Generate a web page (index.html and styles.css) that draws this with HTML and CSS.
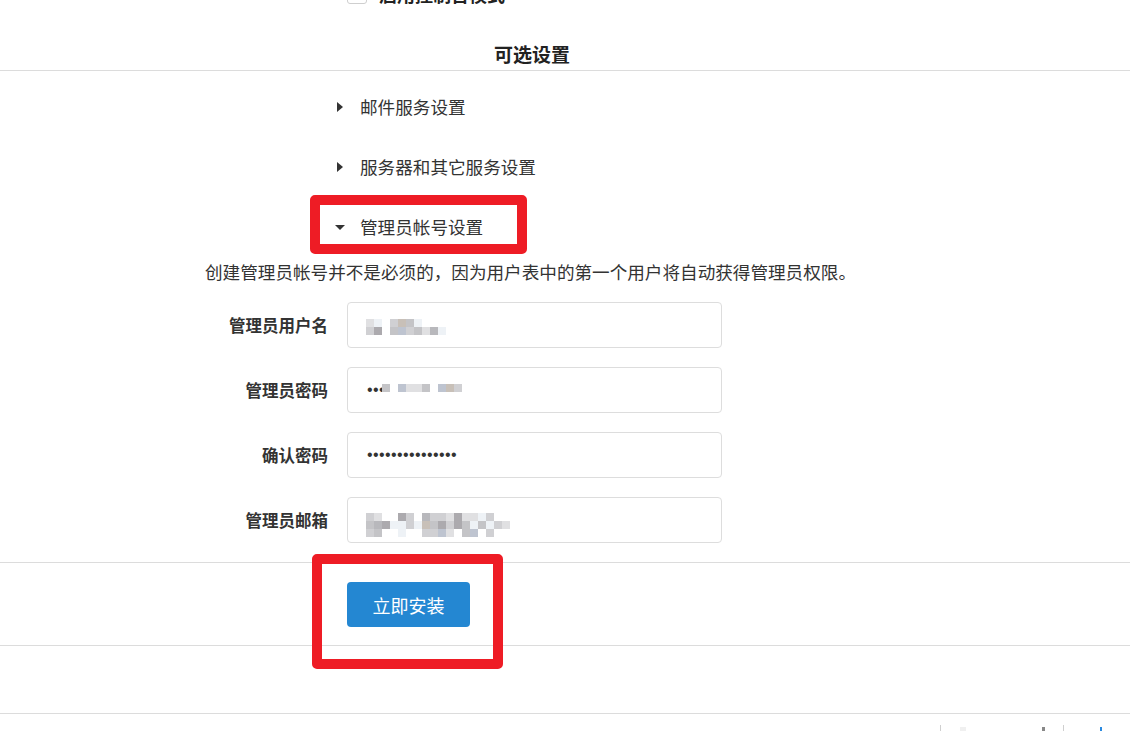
FILE: index.html
```html
<!DOCTYPE html>
<html lang="zh-CN">
<head>
<meta charset="utf-8">
<title>安装</title>
<link rel="stylesheet" href="styles.css">
</head>
<body>
<div class="page">
  <div class="console-row">
    <span class="checkbox"></span>
    <span class="console-label">启用控制台模式</span>
  </div>

  <h2 class="section-title">可选设置</h2>
  <div class="rule"></div>

  <ul class="collapsibles">
    <li class="collapsible"><span class="tri tri-right"></span><span>邮件服务设置</span></li>
    <li class="collapsible"><span class="tri tri-right"></span><span>服务器和其它服务设置</span></li>
    <li class="collapsible"><span class="tri tri-down"></span><span>管理员帐号设置</span></li>
  </ul>

  <p class="desc">创建管理员帐号并不是必须的，因为用户表中的第一个用户将自动获得管理员权限。</p>

  <div class="form">
    <label class="label">管理员用户名</label>
    <div class="field">
      <input class="input" type="text" value="">
      <div class="mosaic mosaic-user">
        <i class="g2"></i><i class="g1"></i><i></i><i class="g3"></i><i class="g7"></i><i class="g4"></i><i class="g1"></i><i></i><i></i><i></i>
        <i class="g3"></i><i class="g6"></i><i></i><i class="g4"></i><i class="g8"></i><i class="g3"></i><i class="g4"></i><i class="g2"></i><i class="g5"></i><i class="g1"></i>
      </div>
    </div>

    <label class="label">管理员密码</label>
    <div class="field">
      <input class="input pw" type="password" value="abc">
      <div class="mosaic mosaic-pass">
        <i class="g4"></i><i></i><i class="g8"></i><i class="g2"></i><i class="g2"></i><i class="g4"></i><i></i><i class="g8"></i><i class="g7"></i><i class="g3"></i>
      </div>
    </div>

    <label class="label">确认密码</label>
    <div class="field">
      <input class="input pw" type="password" value="abcdefghijklmno">
    </div>

    <label class="label">管理员邮箱</label>
    <div class="field">
      <input class="input" type="text" value="">
      <div class="mosaic mosaic-mail">
        <i class="g3"></i><i class="g2"></i><i></i><i></i><i class="g6"></i><i class="g3"></i><i></i><i class="g5"></i><i class="g3"></i><i class="g3"></i><i class="g2"></i><i class="g6"></i><i class="g2"></i><i class="g2"></i><i class="g1"></i><i class="g3"></i><i></i><i></i><i></i>
        <i class="g4"></i><i class="g5"></i><i class="g6"></i><i class="g1"></i><i class="g1"></i><i class="g3"></i><i class="g1"></i><i class="g7"></i><i class="g4"></i><i class="g6"></i><i class="g3"></i><i class="g6"></i><i class="g4"></i><i class="g1"></i><i class="g4"></i><i class="g1"></i><i class="g3"></i><i class="g2"></i><i></i>
        <i class="g3"></i><i class="g4"></i><i></i><i></i><i class="g1"></i><i></i><i></i><i class="g3"></i><i class="g3"></i><i class="g8"></i><i class="g2"></i><i></i><i class="g4"></i><i class="g8"></i><i></i><i class="g3"></i><i></i><i></i><i></i>
      </div>
    </div>
  </div>

  <div class="rule rule-form-end"></div>
  <div class="actions">
    <button class="btn-primary" type="button">立即安装</button>
  </div>
  <div class="rule"></div>
  <div class="spacer"></div>
  <div class="rule"></div>
  <footer class="footer">
    <span class="sep"></span>
    <span class="mark mark-faint"></span>
    <span class="mark mark-dark"></span>
    <span class="sep"></span>
    <span class="mark mark-blue"></span>
  </footer>

  <div class="annot annot-account"></div>
  <div class="annot annot-install"></div>
</div>
</body>
</html>
```

FILE: styles.css
```css
html, body {
  margin: 0;
  padding: 0;
  overflow: hidden;
  background: #fff;
}

body {
  font-family: "Noto Sans CJK SC", "Noto Sans", sans-serif;
  color: #333;
}

.page {
  position: relative;
  display: flow-root;
  width: 1130px;
  height: 731px;
}

.console-row {
  display: flex;
  align-items: center;
  gap: 12px;
  height: 20px;
  margin-top: -16px;
  padding-left: 347px;
}

.checkbox {
  width: 18px;
  height: 18px;
  border: 1px solid #cfcfcf;
  border-radius: 3px;
  background: #fff;
}

.console-label {
  font-size: 18px;
  font-weight: bold;
  line-height: 20px;
  color: #222;
}

.section-title {
  margin: 37px 0 0;
  padding-right: 66px;
  text-align: center;
  font-size: 19px;
  font-weight: bold;
  line-height: 26px;
  color: #222;
}

.rule {
  height: 1px;
  background: #dcdcdc;
}

.section-title + .rule {
  margin-top: 3px;
}

.collapsibles {
  list-style: none;
  margin: 23px 0 0;
  padding: 0 0 0 335px;
  display: flex;
  flex-direction: column;
  gap: 34px;
}

.collapsible {
  display: flex;
  align-items: center;
  height: 26px;
  font-size: 17.6px;
  line-height: 26px;
  color: #333;
}

.tri {
  width: 25px;
  display: flex;
  align-items: center;
}

.tri::before {
  content: "";
  display: block;
  width: 0;
  height: 0;
}

.tri-right::before {
  margin-left: 2px;
  border-top: 5px solid transparent;
  border-bottom: 5px solid transparent;
  border-left: 6px solid #333;
}

.tri-down::before {
  border-left: 5px solid transparent;
  border-right: 5px solid transparent;
  border-top: 5px solid #333;
}

.desc {
  margin: 19px 0 0;
  padding-left: 205px;
  font-size: 17.6px;
  line-height: 26px;
  color: #333;
}

.form {
  display: grid;
  grid-template-columns: 328px 375px;
  grid-auto-rows: 46px;
  column-gap: 19px;
  row-gap: 19px;
  margin-top: 17px;
}

.label {
  display: flex;
  align-items: center;
  justify-content: flex-end;
  font-size: 16.5px;
  font-weight: bold;
  color: #333;
}

.field {
  position: relative;
}

.input {
  box-sizing: border-box;
  width: 100%;
  height: 100%;
  margin: 0;
  padding: 0 19px;
  border: 1px solid #dddddd;
  border-radius: 4px;
  background: #fff;
  outline: none;
  font-family: "Liberation Sans", sans-serif;
  font-size: 14px;
  color: #333;
}

.input.pw {
  font-size: 16px;
  letter-spacing: 0.4px;
}

.mosaic {
  position: absolute;
  display: grid;
  grid-auto-rows: 8px;
}

.mosaic i {
  display: block;
}

.mosaic-user {
  left: 19px;
  top: 17px;
  grid-template-columns: repeat(10, 8px);
}

.mosaic-pass {
  left: 35px;
  top: 17px;
  grid-template-columns: repeat(10, 8px);
}

.mosaic-mail {
  left: 19px;
  top: 16px;
  grid-template-columns: repeat(19, 8px);
}

.g1 { background: #eef2f6; }
.g2 { background: #e0e0e2; }
.g3 { background: #d0d0d3; }
.g4 { background: #c4c4c7; }
.g5 { background: #b8b8bc; }
.g6 { background: #acaaae; }
.g7 { background: #c8c0b8; }
.g8 { background: #bec4d0; }

.rule-form-end {
  margin-top: 19px;
}

.actions {
  padding: 19px 0 18px 347px;
}

.btn-primary {
  display: block;
  width: 123px;
  height: 45px;
  border: none;
  border-radius: 4px;
  background: #2487d2;
  color: #fff;
  font-family: "Noto Sans CJK SC", sans-serif;
  font-size: 18px;
  cursor: pointer;
}

.spacer {
  height: 67px;
}

.footer {
  display: flex;
  align-items: flex-start;
  padding: 11px 0 0 940px;
  height: 20px;
}

.sep {
  width: 1px;
  height: 12px;
  background: #cfcfcf;
}

.mark {
  width: 4px;
  height: 6px;
  margin-top: 2px;
}

.mark-faint {
  margin-left: 19px;
  width: 6px;
  background: #f0f0f0;
}

.mark-dark {
  margin-left: 76px;
  width: 3px;
  background: #888;
}

.mark-dark + .sep {
  margin-left: 18px;
}

.mark-blue {
  margin-left: 36px;
  width: 2px;
  background: #2a8ae0;
}

.annot {
  position: absolute;
  box-sizing: border-box;
  border: 10px solid #ee1c25;
  border-radius: 5px;
}

.annot-account {
  left: 310px;
  top: 195px;
  width: 217px;
  height: 59px;
}

.annot-install {
  left: 312px;
  top: 554px;
  width: 191px;
  height: 115px;
}
```
